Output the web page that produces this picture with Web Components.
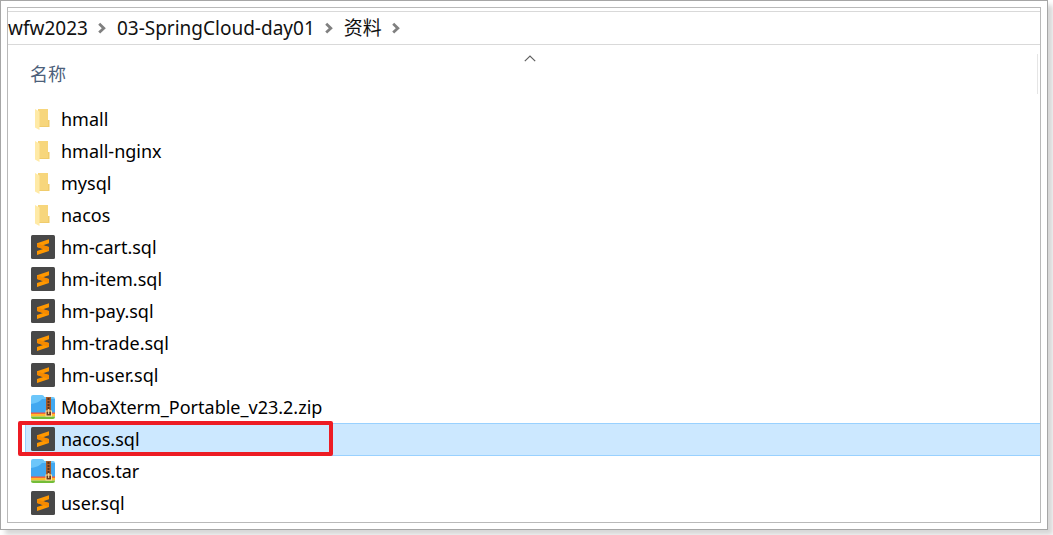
<!DOCTYPE html>
<html lang="zh-CN">
<head>
<meta charset="utf-8">
<title>资料</title>
<style>
  html, body { height: 100%; margin: 0; background: #fff; }
  body { box-sizing: border-box; padding: 0 5px 5px 0; overflow: hidden; font: 18px/32px "Noto Sans", "Noto Sans CJK SC", sans-serif; color: #000; }
</style>
</head>
<body>
<file-window>
  <path-bar slot="path">
    <path-step>wfw2023</path-step>
    <path-step>03-SpringCloud-day01</path-step>
    <path-step>资料</path-step>
  </path-bar>
  <column-header slot="header">名称</column-header>
  <file-row kind="folder">hmall</file-row>
  <file-row kind="folder">hmall-nginx</file-row>
  <file-row kind="folder">mysql</file-row>
  <file-row kind="folder">nacos</file-row>
  <file-row kind="sql">hm-cart.sql</file-row>
  <file-row kind="sql">hm-item.sql</file-row>
  <file-row kind="sql">hm-pay.sql</file-row>
  <file-row kind="sql">hm-trade.sql</file-row>
  <file-row kind="sql">hm-user.sql</file-row>
  <file-row kind="zip">MobaXterm_Portable_v23.2.zip</file-row>
  <file-row kind="sql" selected>nacos.sql</file-row>
  <file-row kind="zip">nacos.tar</file-row>
  <file-row kind="sql">user.sql</file-row>
</file-window>
<script>
const define = (name, html) => customElements.define(name, class extends HTMLElement {
  constructor() {
    super();
    const t = document.createElement('template');
    t.innerHTML = html;
    this.attachShadow({ mode: 'open' }).append(t.content.cloneNode(true));
  }
});

define('file-window', `
<style>
  :host { display: block; box-sizing: border-box; min-height: 100%; padding: 6px; border: 1px solid #a6a6a6; background: #fff; box-shadow: 5px 5px 5px rgba(0,0,0,.16); }
  .pane { border: 1px solid #b9b9b9; padding-bottom: 3px; }
</style>
<div class="pane">
  <slot name="path"></slot>
  <slot name="header"></slot>
  <main><slot></slot></main>
</div>`);

define('path-bar', `
<style>
  :host { display: block; margin-top: 3px; border: solid #d9d9d9; border-width: 1px 0; font-size: 19px; }
  nav { display: flex; height: 32px; align-items: center; overflow: hidden; }
</style>
<nav><slot></slot></nav>`);

define('path-step', `
<style>
  :host { display: flex; align-items: center; white-space: nowrap; }
  a { color: #111; text-decoration: none; }
  svg { display: block; margin: 0 11px 0 10px; }
</style>
<a href="#"><slot></slot></a>
<svg width="8" height="12" viewBox="0 0 8 12" aria-hidden="true"><path d="M1.200 1.800L5.800 6.200L1.200 10.600" fill="none" stroke="#808080" stroke-width="2.800"/></svg>`);

define('column-header', `
<style>
  :host { display: grid; grid-template-columns: 1fr auto 1fr; height: 58px; box-sizing: border-box; padding: 9px 2px 9px 22px; color: #4c607a; }
  button { all: unset; justify-self: start; line-height: 36px; height: 40px; }
  svg { margin: 1px 8px 0 0; }
  i { justify-self: end; width: 1px; height: 40px; background: #e5e5e5; }
</style>
<button><slot></slot></button>
<svg width="12" height="7" viewBox="0 0 12 7" aria-hidden="true"><path d="M.8 6.200L6 1L11.200 6.200" fill="none" stroke="#606060" stroke-width="1.200"/></svg>
<i></i>`);

const icons = {
  folder: `<svg width="24" height="24" viewBox="0 0 24 24"><path d="M7 2H17V20H7z" fill="#f7d67c"/><path d="M17 13h1.500V20H8v-1h9z" fill="#f0cc6c"/><path d="M4 2L8.500 4.500V23L4 20.500z" fill="#ffeaa6"/></svg>`,
  sql: `<svg width="24" height="24" viewBox="0 0 24 24"><rect width="24" height="24" rx="1.500" fill="#484848"/><path d="M6 8.300L18 4.300V8.200L12 10.300L18 12.100V16.100L6 20V16L12.200 13.900L6 12.100z" fill="#ff9800"/><path d="M6 8.300V12.100L18 16.100V12.100L12 10.300z" fill="#f58a00"/></svg>`,
  zip: `<svg width="24" height="24" viewBox="0 0 24 24"><path d="M0 2Q0 0 2 0H11Q12.500 0 13.500 2H22Q24 2 24 4V20H0z" fill="#6cc6fa"/><path d="M0 9Q8 8 11 4H24V19H0z" fill="#42a8f0"/><path d="M0 17.500H24V20H0z" fill="#f5533d"/><path d="M0 18.800H24V21.500H0z" fill="#ffbd2d"/><path d="M0 21.500H24V22Q24 24 22 24H2Q0 24 0 22z" fill="#73bd38"/><path d="M15 2h5v19h-5z" fill="#a85a28"/><path d="M17.500 3v12" stroke="#5a321c" stroke-width="2" stroke-dasharray="2 1"/><rect x="15" y="16" width="5.500" height="5" fill="#6c391b" stroke="#ffe3a0"/><path d="M17.700 14v5" stroke="#ffe3a0"/></svg>`
};

customElements.define('file-row', class extends HTMLElement {
  constructor() {
    super();
    this.attachShadow({ mode: 'open' }).innerHTML = `
<style>
  :host { display: flex; position: relative; align-items: center; gap: 6px; height: 32px; margin-left: 17px; padding-left: 6px; white-space: nowrap; }
  :host([selected]) { background: #cce8ff; box-shadow: inset 1px 1px #99d1ff, 0 1px #99d1ff; }
  svg { display: block; flex: none; }
  .mark { display: none; }
  :host([selected]) .mark { display: block; position: absolute; z-index: 1; left: -7px; top: -2px; width: 315px; height: 35px; box-sizing: border-box; border: 4px solid #ed1c24; border-radius: 2px; }
</style>${icons[this.getAttribute('kind')]}<span><slot></slot></span><div class="mark"></div>`;
  }
});
</script>
</body>
</html>
